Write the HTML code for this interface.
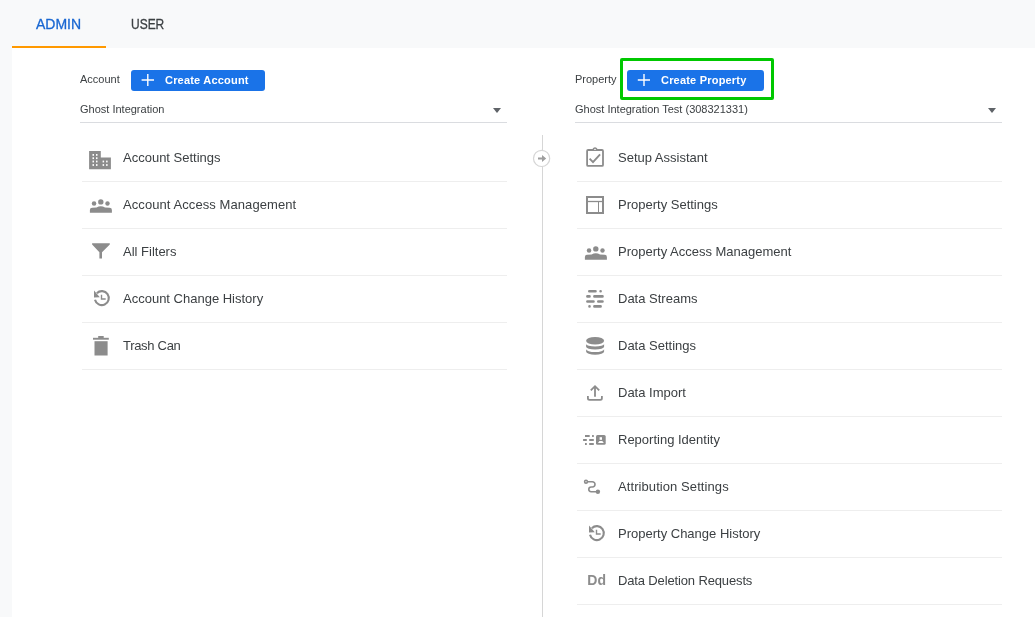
<!DOCTYPE html>
<html><head><meta charset="utf-8">
<style>
html,body{margin:0;padding:0;}
body{will-change:transform;width:1035px;height:617px;overflow:hidden;background:#f8f9fa;position:relative;font-family:"Liberation Sans",sans-serif;}
.a{position:absolute;white-space:nowrap;}
.tab{font-size:14px;line-height:14px;-webkit-text-stroke:0.3px currentColor;}
.card{position:absolute;left:12px;top:48px;right:0;bottom:0;background:#fff;}
.lbl{font-size:11px;line-height:11px;color:#3c4043;}
.btn{position:absolute;top:70px;height:21px;background:#1a73e8;border-radius:3px;}
.btxt{font-size:11px;line-height:11px;color:#fff;font-weight:bold;letter-spacing:0.2px;}
.sel{font-size:11px;line-height:11px;color:#3c4043;}
.uline{position:absolute;height:1px;background:#dadce0;width:427px;top:122px;}
.tri{position:absolute;width:0;height:0;border-left:4.5px solid transparent;border-right:4.5px solid transparent;border-top:5.5px solid #5f6368;top:107.5px;}
.item{font-size:13px;line-height:13px;color:#3c4043;}
.div{position:absolute;height:1px;background:#eeeeee;width:425px;}
svg.ic{position:absolute;left:0;top:0;overflow:visible;}
</style></head><body>
<div class="a tab" id="t_admin" style="left:36px;top:17px;color:#1967d2;">ADMIN</div>
<div class="a tab" id="t_user" style="left:130.7px;top:17px;color:#3c4043;transform:scaleX(0.855);transform-origin:0 0;">USER</div>
<div class="a" style="left:12px;top:46px;width:94px;height:2px;background:#f90;"></div>
<div class="card"></div>

<!-- left header -->
<div class="a lbl" id="l_account" style="left:80px;top:74px;">Account</div>
<div class="btn" style="left:131px;width:134px;"></div>
<div class="a btxt" id="b_acc" style="left:165px;top:74.5px;">Create Account</div>
<div class="a sel" id="s_left" style="left:80px;top:104px;">Ghost Integration</div>
<div class="tri" style="left:493.3px;"></div>
<div class="uline" style="left:80px;"></div>

<!-- right header -->
<div class="a lbl" id="l_prop" style="left:575px;top:74px;">Property</div>
<div class="a" style="left:620px;top:58px;width:148px;height:36px;border:3px solid #00c800;border-radius:2px;"></div>
<div class="btn" style="left:627px;width:137px;"></div>
<div class="a btxt" id="b_prop" style="left:661px;top:74.5px;">Create Property</div>
<div class="a sel" id="s_right" style="left:575px;top:104px;">Ghost Integration Test (308321331)</div>
<div class="tri" style="left:988.3px;"></div>
<div class="uline" style="left:575px;"></div>

<!-- vertical line -->
<div class="a" style="left:542px;top:135px;width:1px;height:482px;background:#d6d6d6;"></div>

<svg class="ic" width="1035" height="617">
  <!-- plus icons -->
  <g stroke="#fff" stroke-width="1.4" fill="none">
    <path d="M141.6 80H154M147.8 74V86"/>
    <path d="M637.8 80H650M644 74V86"/>
  </g>

  <g fill="#8c8c8c" stroke="none">
    <!-- building -->
    <path d="M89.1 150.9H100.8V157.5H110.9V169.2H89.1Z"/>
    <!-- people left -->
    <g id="ppl">
      <circle cx="94.05" cy="203.5" r="2.25"/>
      <circle cx="100.8" cy="201.9" r="2.7"/>
      <circle cx="107.5" cy="203.5" r="2.2"/>
      <path d="M89.9 212.7V210Q89.9 207.9 92.2 207.8L96.6 207.6Q98.6 206.3 100.8 206.3Q103 206.3 105 207.6L109.6 207.8Q111.9 207.9 111.9 210V212.7Z"/>
    </g>
    <use href="#ppl" transform="translate(495 47)"/>
    <!-- filter -->
    <path d="M92.1 243.3H109.8V244.6L102 252.3V258.6H99.4V252.3L92.1 244.6Z"/>
    <!-- trash -->
    <rect x="93" y="337.8" width="15.8" height="1.9"/>
    <rect x="98.2" y="336" width="5.5" height="2"/>
    <rect x="94.5" y="341.2" width="13.1" height="14.3"/>
    <!-- database -->
    <ellipse cx="595.1" cy="340.8" rx="9" ry="3.8"/>
    <!-- reporting identity box -->
    <rect x="596" y="435" width="9.7" height="9.7" rx="1.5"/>
    <!-- attribution dot -->
    <circle cx="597.9" cy="491.7" r="2.2"/>
  </g>
  <g fill="#fff">
    <rect x="92.5" y="154" width="1.5" height="1.8"/><rect x="96" y="154" width="1.5" height="1.8"/>
    <rect x="92.5" y="157.3" width="1.5" height="1.8"/><rect x="96" y="157.3" width="1.5" height="1.8"/>
    <rect x="92.5" y="160.6" width="1.5" height="1.8"/><rect x="96" y="160.6" width="1.5" height="1.8"/>
    <rect x="92.5" y="164.1" width="1.5" height="1.8"/><rect x="96" y="164.1" width="1.5" height="1.8"/>
    <rect x="102.6" y="160.6" width="1.5" height="1.8"/><rect x="106.1" y="160.6" width="1.5" height="1.8"/>
    <rect x="102.6" y="164.1" width="1.5" height="1.8"/><rect x="106.1" y="164.1" width="1.5" height="1.8"/>
    <!-- person in reporting identity -->
    <rect x="599.6" y="437.2" width="2.4" height="2.6"/>
    <path d="M598 443.1L599.4 441H602.3L603.8 443.1Z"/>
  </g>
  <g fill="none" stroke="#8c8c8c">
    <!-- history left -->
    <g id="hist">
      <path d="M95 299.8A7 7 0 1 0 96.85 293.15" stroke-width="2.1"/>
      <path d="M94 290.6V297.5L99.8 297.3Z" fill="#8c8c8c" stroke="none"/>
      <path d="M101.5 294.7V299H105.7" stroke-width="1.4"/>
    </g>
    <use href="#hist" transform="translate(495 235)"/>
    <!-- clipboard -->
    <rect x="587.1" y="150" width="15.9" height="15.9" rx="1" stroke-width="1.8"/>
    <path d="M591.6 150.5L593.2 147.9Q595 146.6 596.8 147.9L598.4 150.5Z" fill="#8c8c8c" stroke="none"/>
    <ellipse cx="595" cy="149.4" rx="0.8" ry="0.55" fill="#fff" stroke="none"/>
    <path d="M589.6 158.7L593 162.1L600.1 154.3" stroke-width="1.9"/>
    <!-- property settings -->
    <rect x="587" y="197" width="16" height="16" stroke-width="2"/>
    <path d="M587 201.5H603" stroke-width="1.3"/>
    <path d="M598.5 201.5V213" stroke-width="1"/>
    <!-- data streams -->
    <g stroke-width="2.6" stroke-linecap="round">
      <path d="M589.3 291.3H595.5M600.6 291.3H600.61M587.4 296.4H589.5M594.4 296.4H602.5M587.4 301.5H593.5M598.3 301.5H602.5M589.5 306.4H589.51M594.4 306.4H600.6"/>
    </g>
    <!-- database bands -->
    <path d="M586.1 344A9 2.5 0 0 0 604.1 344L604.1 346.8A9 2.6 0 0 1 586.1 346.8Z" fill="#8c8c8c" stroke="none"/>
    <path d="M586.1 349.2A9 2.9 0 0 0 604.1 349.2L604.1 351.6A9 3.2 0 0 1 586.1 351.6Z" fill="#8c8c8c" stroke="none"/>
    <!-- upload -->
    <path d="M595 396.7V386.5M590.8 390.4L595 386.2L599.2 390.4" stroke-width="1.8"/>
    <path d="M587.9 396V398.3Q587.9 399.9 589.5 399.9H600.3Q601.9 399.9 601.9 398.3V396" stroke-width="1.8"/>
    <!-- reporting identity bars -->
    <path d="M585 436H589.7M592.1 436H593.8M583.1 440H586.8M589.2 440H593.8M585 444H586.8M589.2 444H593.8" stroke-width="1.8"/>
    <!-- attribution -->
    <circle cx="586" cy="481.7" r="1.4" stroke-width="1.6"/>
    <path d="M587.4 481.7H592.35A2.65 2.65 0 0 1 592.35 487H591.15A2.35 2.35 0 0 0 591.15 491.7H597" stroke-width="1.6"/>
  </g>
  <!-- circle arrow -->
  <circle cx="541.6" cy="158.4" r="8.1" fill="#fff" stroke="#d6d6d6" stroke-width="1.2"/>
  <path d="M538 157.5H542V155L546.2 158.5L542 162V159.5H538Z" fill="#9e9e9e"/>
</svg>

<!-- left list -->
<div class="a item" id="li0" style="left:123px;top:151px;">Account Settings</div>
<div class="a item" id="li1" style="left:123px;top:198px;letter-spacing:0.08px;">Account Access Management</div>
<div class="a item" id="li2" style="left:123px;top:245px;">All Filters</div>
<div class="a item" id="li3" style="left:123px;top:292px;">Account Change History</div>
<div class="a item" id="li4" style="left:123px;top:339px;letter-spacing:-0.3px;">Trash Can</div>
<div class="div" style="left:82px;top:181px;"></div>
<div class="div" style="left:82px;top:228px;"></div>
<div class="div" style="left:82px;top:275px;"></div>
<div class="div" style="left:82px;top:322px;"></div>
<div class="div" style="left:82px;top:369px;"></div>

<!-- right list -->
<div class="a item" id="ri0" style="left:618px;top:151px;">Setup Assistant</div>
<div class="a item" id="ri1" style="left:618px;top:198px;">Property Settings</div>
<div class="a item" id="ri2" style="left:618px;top:245px;">Property Access Management</div>
<div class="a item" id="ri3" style="left:618px;top:292px;">Data Streams</div>
<div class="a item" id="ri4" style="left:618px;top:339px;">Data Settings</div>
<div class="a item" id="ri5" style="left:618px;top:386px;">Data Import</div>
<div class="a item" id="ri6" style="left:618px;top:433px;">Reporting Identity</div>
<div class="a item" id="ri7" style="left:618px;top:480px;letter-spacing:0.08px;">Attribution Settings</div>
<div class="a item" id="ri8" style="left:618px;top:527px;">Property Change History</div>
<div class="a" id="dd" style="left:587.3px;top:573.3px;font-size:14px;line-height:14px;font-weight:bold;color:#8c8c8c;">Dd</div>
<div class="a item" id="ri9" style="left:618px;top:574px;letter-spacing:-0.14px;">Data Deletion Requests</div>
<div class="div" style="left:577px;top:181px;"></div>
<div class="div" style="left:577px;top:228px;"></div>
<div class="div" style="left:577px;top:275px;"></div>
<div class="div" style="left:577px;top:322px;"></div>
<div class="div" style="left:577px;top:369px;"></div>
<div class="div" style="left:577px;top:416px;"></div>
<div class="div" style="left:577px;top:463px;"></div>
<div class="div" style="left:577px;top:510px;"></div>
<div class="div" style="left:577px;top:557px;"></div>
<div class="div" style="left:577px;top:604px;"></div>

</body></html>
